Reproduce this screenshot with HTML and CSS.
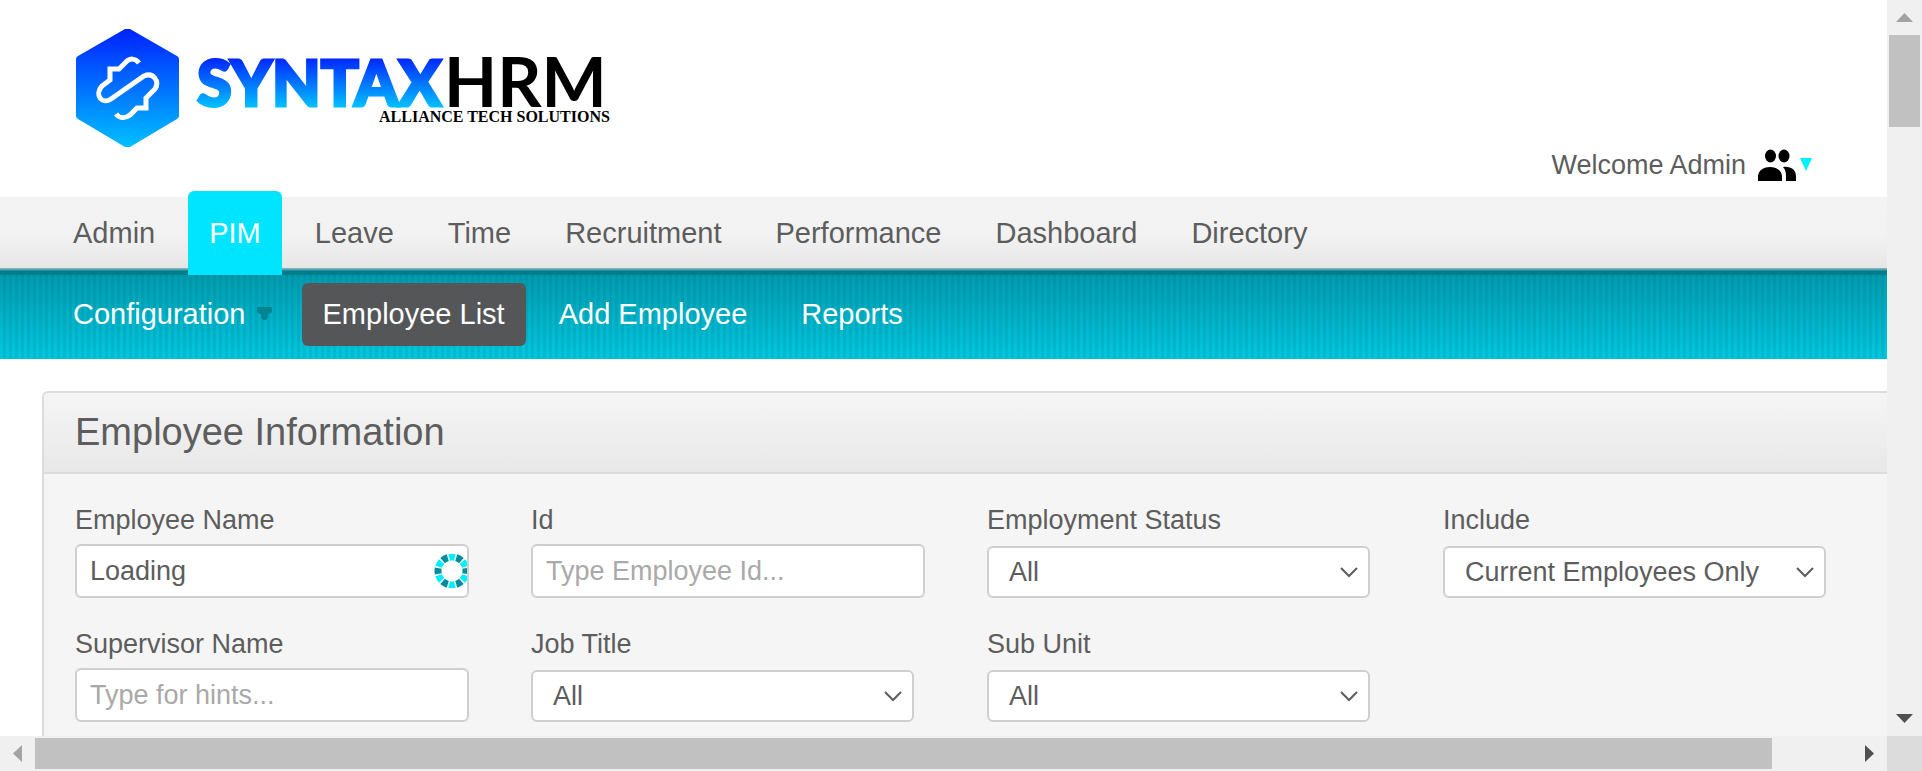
FILE: index.html
```html
<!DOCTYPE html>
<html lang="en">
<head>
<meta charset="utf-8">
<title>SyntaxHRM - Employee Information</title>
<link rel="stylesheet" href="styles.css">
</head>
<body>
<div class="window">
  <div class="viewport">
    <header class="header">
      <a class="brand" href="#" aria-label="SyntaxHRM home">
        <svg class="brand-logo" width="536" height="120" viewBox="0 0 536 120">
          <defs>
            <linearGradient id="hexFill" x1="0" y1="0" x2="0" y2="1">
              <stop offset="0" stop-color="#0022ff"/><stop offset="1" stop-color="#00c0ff"/>
            </linearGradient>
            <linearGradient id="wordFill" gradientUnits="userSpaceOnUse" x1="0" y1="29" x2="0" y2="79">
              <stop offset="0" stop-color="#0022ff"/><stop offset="1" stop-color="#00c0ff"/>
            </linearGradient>
          </defs>
          <path fill="url(#hexFill)" d="M49 1h5L101 28q2 1 2 3v57q0 2-2 3L54 119h-5L2 91q-2-1-2-3V31q0-2 2-3z"/>
          <path fill="none" stroke="#fff" stroke-width="5" stroke-linejoin="miter" d="M63 35C59 30 54 30 50 34L43 41H34V52L26 58C18 67 26 77 35 71L68 48C77 44 84 53 79 61L70 70V80H61L54 87C50 90 44 91 40 86"/>
          <text class="word-syntax" x="121" y="78" fill="url(#wordFill)" stroke="url(#wordFill)">SYNTAX</text>
          <text class="word-hrm" x="368" y="79">HRM</text>
          <text class="word-tagline" x="303" y="94">ALLIANCE TECH SOLUTIONS</text>
        </svg>
      </a>
      <button class="welcome" type="button">
        <span>Welcome Admin</span>
        <svg class="welcome-icon" width="54" height="34" viewBox="0 0 54 34">
          <ellipse cx="12.500" cy="8" rx="5.500" ry="6.500"/>
          <ellipse cx="26" cy="8" rx="5.500" ry="6.500"/>
          <path d="M0 33V28C1 16 23 16 24 28V33zM25 19C33 18 38 22 38 28V33H28V28C28 24 27 21 25 19z"/>
          <path fill="#00f0ff" d="M42 10H54L48 23z"/>
        </svg>
      </button>
    </header>

    <nav class="menu" aria-label="Main">
      <a class="menu-item" href="#">Admin</a>
      <a class="menu-item menu-item-current" href="#">PIM</a>
      <a class="menu-item" href="#">Leave</a>
      <a class="menu-item" href="#">Time</a>
      <a class="menu-item" href="#">Recruitment</a>
      <a class="menu-item" href="#">Performance</a>
      <a class="menu-item" href="#">Dashboard</a>
      <a class="menu-item" href="#">Directory</a>
    </nav>

    <nav class="submenu" aria-label="PIM">
      <a class="submenu-item submenu-item-parent" href="#">Configuration<svg class="submenu-arrow" width="15" height="13" viewBox="0 0 15 13"><path d="M0 0H15V5L12 7H11V10L9 13H6L4 10V7H3L0 5z"/></svg></a>
      <a class="submenu-item submenu-item-current" href="#">Employee List</a>
      <a class="submenu-item" href="#">Add Employee</a>
      <a class="submenu-item" href="#">Reports</a>
    </nav>

    <main class="content">
      <section class="panel">
        <h1 class="panel-title">Employee Information</h1>
        <form class="search">
          <div class="field">
            <label for="name">Employee Name</label>
            <div class="loading-box">
              <input id="name" type="text" value="Loading">
              <svg class="spinner" width="33" height="34" viewBox="0 0 33 34">
                <g fill="none" stroke-width="7">
                  <circle cx="18" cy="17" r="14" stroke="#00f0ff" pathLength="120" stroke-dasharray="8 12" stroke-dashoffset="-6"/>
                  <circle cx="18" cy="17" r="14" stroke="#008c9e" pathLength="120" stroke-dasharray="8 12" stroke-dashoffset="4"/>
                </g>
              </svg>
            </div>
          </div>
          <div class="field">
            <label for="id">Id</label>
            <input id="id" type="text" placeholder="Type Employee Id...">
          </div>
          <div class="field">
            <label for="status">Employment Status</label>
            <div class="select-box"><select id="status"><option>All</option></select><svg class="chevron" width="18" height="12" viewBox="0 0 18 12"><path d="M1 1L9 9L17 1"/></svg></div>
          </div>
          <div class="field">
            <label for="include">Include</label>
            <div class="select-box"><select id="include"><option>Current Employees Only</option></select><svg class="chevron" width="18" height="12" viewBox="0 0 18 12"><path d="M1 1L9 9L17 1"/></svg></div>
          </div>
          <div class="field">
            <label for="supervisor">Supervisor Name</label>
            <input id="supervisor" type="text" placeholder="Type for hints...">
          </div>
          <div class="field">
            <label for="job">Job Title</label>
            <div class="select-box"><select id="job"><option>All</option></select><svg class="chevron" width="18" height="12" viewBox="0 0 18 12"><path d="M1 1L9 9L17 1"/></svg></div>
          </div>
          <div class="field">
            <label for="unit">Sub Unit</label>
            <div class="select-box"><select id="unit"><option>All</option></select><svg class="chevron" width="18" height="12" viewBox="0 0 18 12"><path d="M1 1L9 9L17 1"/></svg></div>
          </div>
        </form>
      </section>
    </main>
  </div>

  <div class="scrollbar scrollbar-vertical">
    <button class="scroll-button scroll-button-idle" type="button" aria-label="Scroll up"><svg width="17" height="9" viewBox="0 0 17 9"><path d="M0 9L8.500 0L17 9z"/></svg></button>
    <div class="scroll-track"><div class="scroll-thumb"></div></div>
    <button class="scroll-button" type="button" aria-label="Scroll down"><svg width="17" height="9" viewBox="0 0 17 9"><path d="M0 0L8.500 9L17 0z"/></svg></button>
  </div>
  <div class="scrollbar scrollbar-horizontal">
    <button class="scroll-button scroll-button-idle" type="button" aria-label="Scroll left"><svg width="9" height="17" viewBox="0 0 9 17"><path d="M9 0L0 8.500L9 17z"/></svg></button>
    <div class="scroll-track"><div class="scroll-thumb"></div></div>
    <button class="scroll-button" type="button" aria-label="Scroll right"><svg width="9" height="17" viewBox="0 0 9 17"><path d="M0 0L9 8.500L0 17z"/></svg></button>
  </div>
  <div class="scroll-corner"></div>
</div>
</body>
</html>
```

FILE: styles.css
```css
* {
  box-sizing: border-box;
}

body {
  margin: 0;
  background: #fff;
  color: #5d5d5d;
  font: 27px/32px "Liberation Sans", Arial, sans-serif;
}

a {
  color: inherit;
  text-decoration: none;
}

button {
  padding: 0;
  border: 0;
  background: none;
  color: inherit;
  font: inherit;
}

svg {
  display: block;
}

.window {
  display: grid;
  grid-template: minmax(0, 1fr) 35px / minmax(0, 1fr) 35px;
  height: 100vh;
}

.viewport {
  overflow: hidden;
}

/* Header */
.header {
  display: flex;
  justify-content: space-between;
  align-items: flex-end;
  padding: 28px 75px 15px 76px;
}

.brand {
  padding-bottom: 34px;
}

.word-syntax {
  font: 900 63px Lato, sans-serif;
  stroke-width: 3px;
}

.word-hrm {
  font: 700 69px Lato, sans-serif;
}

.word-tagline {
  font: 700 16px "Liberation Serif", serif;
}

.welcome {
  display: flex;
  align-items: center;
  gap: 12px;
}

/* Main menu */
.menu {
  display: flex;
  align-items: flex-end;
  gap: 12px;
  height: 78px;
  padding-left: 52px;
  background: linear-gradient(#f3f3f3 0, #f2f2f2 50%, #e6e6e6 71px, #8fb9bf 71px, #4a9ea8 73px, #007d8c 74px);
  font-size: 29px;
}

.menu-item {
  height: 84px;
  padding: 26px 21px 0;
  border-radius: 6px 6px 0 0;
}

.menu-item-current {
  background: #00e5ff;
  color: #fff;
}

/* Second level menu */
.submenu {
  display: flex;
  align-items: flex-start;
  gap: 12px;
  height: 84px;
  padding: 8px 0 0 52px;
  background:
    repeating-linear-gradient(90deg, transparent 0 3px, rgba(0, 90, 110, 0.12) 3px 6px),
    linear-gradient(#009bae, #00c8e0);
  color: #fff;
  font-size: 29px;
}

.submenu-item {
  display: flex;
  align-items: center;
  gap: 11px;
  height: 63px;
  padding: 0 21px 2px;
  border-radius: 6px;
}

.submenu-item-parent {
  padding-right: 18px;
}

.submenu-item-current {
  background: #555658;
}

.submenu-arrow {
  fill: #008494;
}

/* Employee search panel */
.content {
  width: calc(100% + 87px);
  padding: 32px 42px;
}

.panel {
  border: 2px solid #dcdcdc;
  border-radius: 6px;
  background: #f5f5f5;
}

.panel-title {
  margin: 0;
  padding: 17px 31px 18px;
  border-bottom: 2px solid #dcdcdc;
  border-radius: 4px 4px 0 0;
  background: linear-gradient(#f5f5f5, #e8e8e8);
  font-size: 38px;
  font-weight: 400;
  line-height: 44px;
}

.search {
  display: grid;
  grid-template-columns: repeat(4, 456px);
  gap: 30px 0;
  padding: 30px 31px;
}

.field {
  display: flex;
  flex-direction: column;
  justify-content: space-between;
  align-items: flex-start;
  height: 94px;
}

input,
select {
  width: 394px;
  height: 54px;
  padding: 0 13px;
  border: 2px solid #cfcfcf;
  border-radius: 6px;
  background: #fff;
  color: #5d5d5d;
  font: inherit;
}

input::placeholder {
  color: #a9a9a9;
  opacity: 1;
}

select {
  display: block;
  width: 383px;
  height: 52px;
  padding: 0 20px;
  appearance: none;
}

.loading-box,
.select-box {
  position: relative;
}

.loading-box input {
  display: block;
}

.spinner {
  position: absolute;
  right: 2px;
  top: 10px;
}

.chevron {
  position: absolute;
  right: 12px;
  top: 21px;
  fill: none;
  stroke: #5d5d5d;
  stroke-width: 2;
  pointer-events: none;
}

/* Scrollbars */
.scrollbar {
  display: flex;
  background: #f0f0f0;
}

.scrollbar-vertical {
  flex-direction: column;
}

.scroll-button {
  display: grid;
  flex: none;
  place-items: center;
  width: 35px;
  height: 35px;
  fill: #505050;
}

.scroll-button-idle {
  fill: #a3a3a3;
}

.scroll-track {
  flex: 1;
}

.scroll-thumb {
  background: #c1c1c1;
}

.scrollbar-vertical .scroll-track {
  padding: 0 2px;
}

.scrollbar-vertical .scroll-thumb {
  height: 92px;
}

.scrollbar-horizontal .scroll-track {
  padding: 2px 0;
}

.scrollbar-horizontal .scroll-thumb {
  width: 95.6%;
  height: 100%;
}

.scroll-corner {
  background: #dcdcdc;
}
```
